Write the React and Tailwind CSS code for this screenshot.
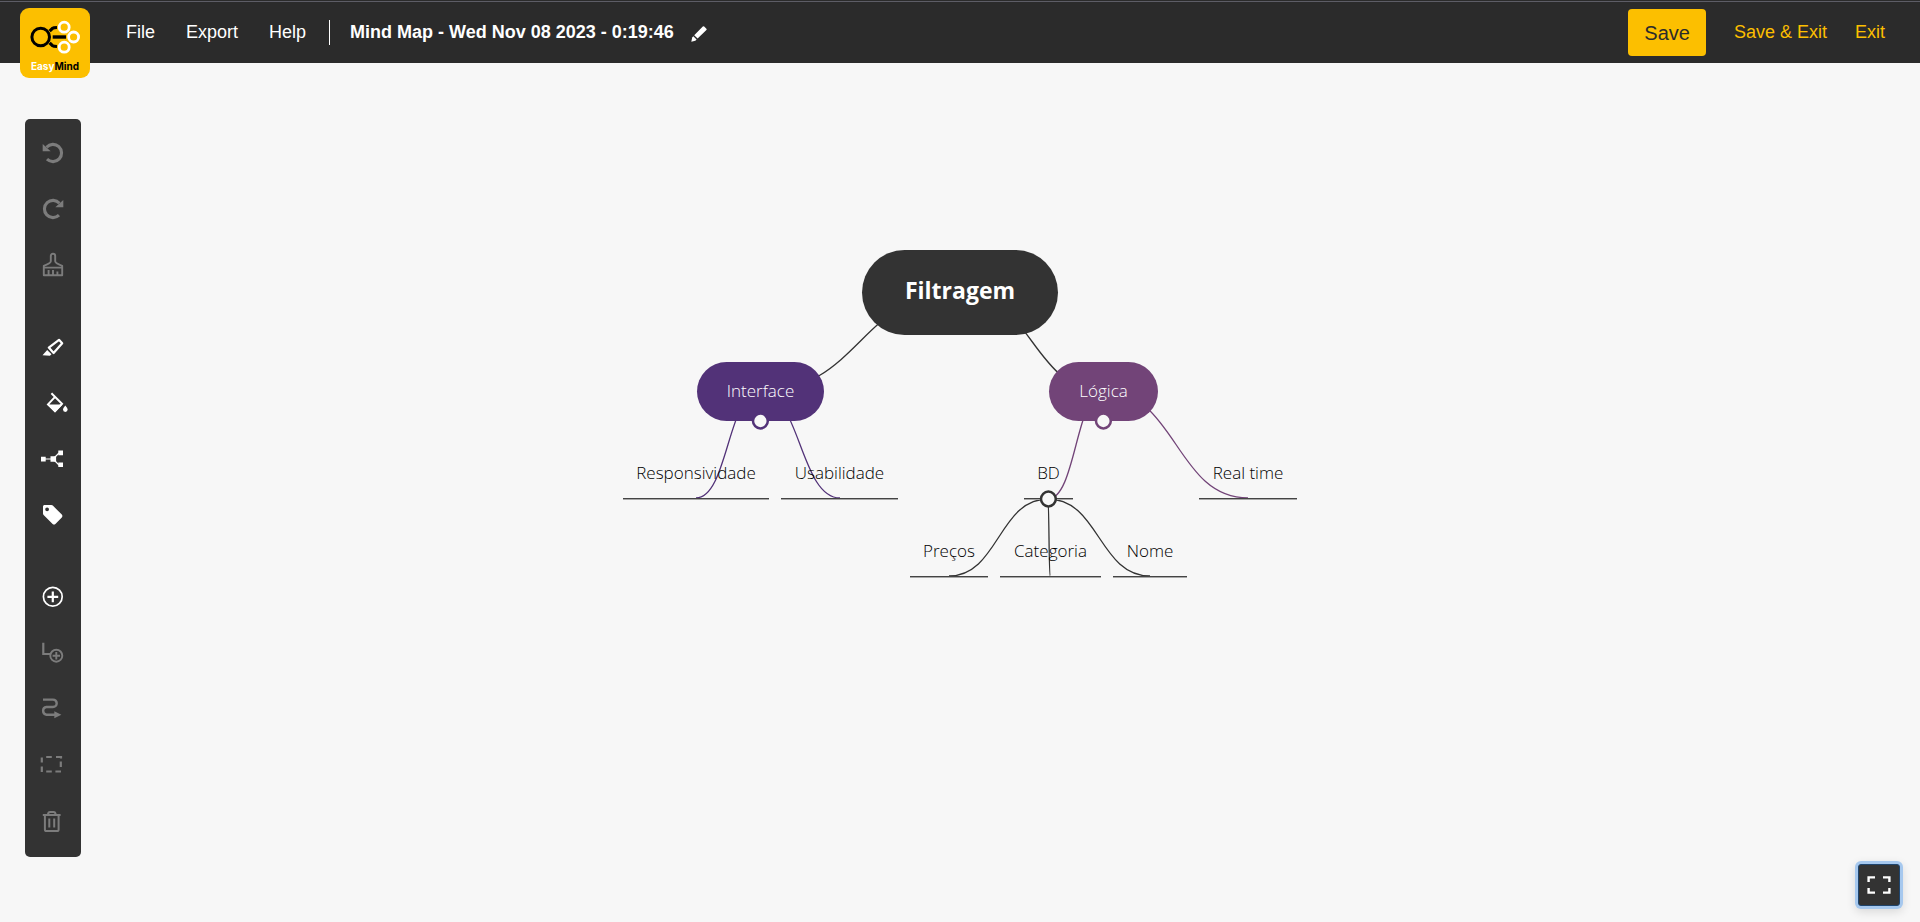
import React from "react";

const MENU = ["File", "Export", "Help"];

function Logo() {
  return (
    <a
      href="#home"
      aria-label="EasyMind home"
      className="flex h-[70px] w-[70px] shrink-0 flex-col items-center gap-1 rounded-[9px] bg-[#fcbf00] pt-3"
    >
      <svg width="50" height="34" viewBox="30 20 50 34" fill="none" className="shrink-0" aria-hidden="true">
        <circle cx="40.7" cy="37" r="8.8" stroke="#000" strokeWidth="3" />
        <path d="M52.7 37H66" stroke="#000" strokeWidth="3.4" />
        <path d="M49.6 31.2l2.6-2.6q1.4-1.1 4.8-1.1M49.6 42.8l2.6 2.6q1.4 1.1 4.8 1.1" stroke="#000" strokeWidth="3.2" />
        <g stroke="#fff" strokeWidth="2.8" fill="#fcbf00">
          <circle cx="64.2" cy="27.2" r="5" />
          <circle cx="73.6" cy="37" r="5" />
          <circle cx="64.2" cy="47.2" r="5" />
        </g>
      </svg>
      <span className="font-['Inter',sans-serif] text-[10px] leading-4 font-bold text-white">
        Easy<span className="text-black">Mind</span>
      </span>
    </a>
  );
}

const ICONS = {
  undo: (
    <>
      <path d="M6 18.2A8.6 8.6 0 1 0 5.6 6.2" stroke="currentColor" strokeWidth="3.1" />
      <path d="M1.7 3v7.2h8z" fill="currentColor" />
    </>
  ),
  redo: (
    <>
      <path d="M18 18.2A8.6 8.6 0 1 1 18.4 6.2" stroke="currentColor" strokeWidth="3.1" />
      <path d="M22.3 3v7.2h-8z" fill="currentColor" />
    </>
  ),
  brush: (
    <>
      <path
        d="M2.8 22.3V12.8Q9.8 10.2 9.8 8.2V3Q9.8.8 12 .8T14.2 3V8.2Q14.2 10.2 21.2 12.8V22.3z"
        stroke="currentColor"
        strokeWidth="1.9"
        strokeLinejoin="round"
      />
      <path d="M3 14.6H21M7.6 22V17M12 22V17M16.4 22V18.5" stroke="currentColor" strokeWidth="1.9" />
    </>
  ),
  highlighter: (
    <>
      <path d="M7.8 12.6L18 4.8l3.2 3.4-8.6 9.8z" stroke="currentColor" strokeWidth="2.2" strokeLinejoin="round" />
      <path d="M1.5 20.2L6.2 15l4.3 4.2-1.6 1.5z" fill="currentColor" />
    </>
  ),
  fill: (
    <>
      <path d="M10.4 2.2L21 12.8 14 20.2 7 13.4l6.6-7" stroke="currentColor" strokeWidth="2" />
      <path d="M6.6 13.4h15L14 21.4z" fill="currentColor" />
      <path d="M24.3 14.6q2.3 2.6 2.3 4a2.3 2.3 0 0 1-4.6 0q0-1.4 2.3-4z" fill="currentColor" />
    </>
  ),
  structure: (
    <>
      <path d="M0 9.8h4.7v4.6H0zM9.5 9.2h5.6v5.6H9.5zM17.3 3.6H22v4.6h-4.7zM17.3 15.4H22V20h-4.7z" fill="currentColor" />
      <path d="M4 12h6M13 11l5-5M13 13l5 5" stroke="currentColor" strokeWidth="1.2" />
    </>
  ),
  tag: (
    <path
      fill="currentColor"
      fillRule="evenodd"
      d="M20.8 11.6l-9-9C11.4 2.2 11 2 10.4 2H3.6C2.7 2 2 2.7 2 3.6v7c0 .5.2 1 .6 1.4l9 9c.8.8 2 .8 2.8 0l6.4-6.6c.8-.8.8-2 0-2.8zM6.1 8.2a1.9 1.9 0 1 1 0-3.8 1.9 1.9 0 0 1 0 3.8z"
    />
  ),
  add: (
    <>
      <circle cx="11.8" cy="11.8" r="9.4" stroke="currentColor" strokeWidth="1.7" />
      <path d="M11.8 6.4v10.8M6.4 11.8h10.8" stroke="currentColor" strokeWidth="2.2" />
    </>
  ),
  addChild: (
    <>
      <path d="M2.3 1.7V13H9" stroke="currentColor" strokeWidth="2.2" />
      <circle cx="15.3" cy="14.7" r="6" stroke="currentColor" strokeWidth="1.9" />
      <path d="M15.3 11v7.4M11.6 14.7H19" stroke="currentColor" strokeWidth="1.9" />
    </>
  ),
  relation: (
    <>
      <path d="M2 2.6H12a3.7 3.7 0 0 1 0 7.4H5.4a3.9 3.9 0 0 0 0 7.7H14" stroke="currentColor" strokeWidth="2.4" />
      <path d="M13.3 14.2L20.4 17.7 13.3 21.2z" fill="currentColor" />
    </>
  ),
  group: (
    <path
      d="M5.2 4H10.8M15 4h5v1.6M.8 9.4V4.4M.8 13.4V19M5.2 18.5H10.8M14.4 18.5H20M19.8 8.6V14"
      stroke="currentColor"
      strokeWidth="2.2"
    />
  ),
  trash: (
    <>
      <path d="M1.8 5.9H19.6M6.9 5.6Q7.2 3 9 3h3.6Q14.4 3 14.7 5.6" stroke="currentColor" strokeWidth="2" />
      <path d="M3.9 6V20.4Q3.9 22 5.5 22H16Q17.6 22 17.6 20.4V6M8.3 9.4V18.6M13.2 9.4V18.6" stroke="currentColor" strokeWidth="2" />
    </>
  ),
};

const TOOL_GROUPS = [
  [
    { icon: "undo", label: "Undo", disabled: true },
    { icon: "redo", label: "Redo", disabled: true },
    { icon: "brush", label: "Copy style", disabled: true },
  ],
  [
    { icon: "highlighter", label: "Line colour" },
    { icon: "fill", label: "Fill colour" },
    { icon: "structure", label: "Structure" },
    { icon: "tag", label: "Tag" },
  ],
  [
    { icon: "add", label: "Add node" },
    { icon: "addChild", label: "Add child", disabled: true },
    { icon: "relation", label: "Add relation", disabled: true },
    { icon: "group", label: "Group", disabled: true },
    { icon: "trash", label: "Delete", disabled: true },
  ],
];

function Toolbar() {
  return (
    <aside className="mt-14 ml-[25px] flex w-14 flex-col gap-[26px] self-start rounded-[5px] bg-[#333] pt-[6px] pb-2">
      {TOOL_GROUPS.map((group, i) => (
        <div key={i} className="flex flex-col">
          {group.map((tool) => (
            <button
              key={tool.icon}
              type="button"
              aria-label={tool.label}
              disabled={tool.disabled}
              className="flex h-14 items-center justify-center text-white disabled:text-[#7c7c7c]"
            >
              <svg width="24" height="24" viewBox="0 0 24 24" fill="none" className="overflow-visible" aria-hidden="true">
                {ICONS[tool.icon]}
              </svg>
            </button>
          ))}
        </div>
      ))}
    </aside>
  );
}

const EDGES = [
  { from: [340, 52], to: [140, 151], color: "#333" },
  { from: [340, 52], to: [484, 151], color: "#333" },
  { from: [140, 151], to: [76, 258], color: "#523278" },
  { from: [140, 151], to: [220, 258], color: "#523278" },
  { from: [484, 151], to: [428, 259], color: "#724478" },
  { from: [484, 151], to: [628, 258], color: "#724478" },
  { from: [428, 259], to: [329, 336], color: "#333" },
  { from: [428, 259], to: [430, 336], color: "#333" },
  { from: [428, 259], to: [530, 336], color: "#333" },
];

const TOGGLES = [
  { x: 140, y: 181, color: "#523278" },
  { x: 483, y: 181, color: "#724478" },
  { x: 428, y: 259, color: "#333" },
];

const LEAF =
  "absolute flex h-11 items-center justify-center border-b border-[#444] pb-2 shadow-[0_1px_0_#a8a8a8]";

function edgePath({ from, to }) {
  const mid = (from[0] + to[0]) / 2;
  return `M${from[0]} ${from[1]}C${mid} ${from[1]} ${mid} ${to[1]} ${to[0]} ${to[1]}`;
}

function MindMap() {
  return (
    <section
      aria-label="Mind map"
      className="relative mt-[177px] h-[350px] w-[680px] font-['Open_Sans',sans-serif] text-[17px] font-[360] text-black"
    >
      <svg className="absolute inset-0" width="680" height="350" viewBox="0 0 680 350" fill="none" aria-hidden="true">
        {EDGES.map((edge, i) => (
          <path key={i} d={edgePath(edge)} stroke={edge.color} strokeWidth="1.3" />
        ))}
      </svg>
      <div className="absolute top-[10px] left-[242px] flex h-[85px] w-[196px] items-center justify-center rounded-full bg-[#333] pb-1 text-[23px] font-bold text-white">
        Filtragem
      </div>
      <div className="absolute top-[122px] left-[77px] flex h-[59px] w-[127px] items-center justify-center rounded-full bg-[#523278] pb-[2px] text-white">
        Interface
      </div>
      <div className="absolute top-[122px] left-[429px] flex h-[59px] w-[109px] items-center justify-center rounded-full bg-[#724478] pb-[2px] text-white">
        Lógica
      </div>
      <div className={`${LEAF} top-[215px] left-[3px] w-[146px]`}>Responsividade</div>
      <div className={`${LEAF} top-[215px] left-[161px] w-[117px]`}>Usabilidade</div>
      <div className={`${LEAF} top-[215px] left-[404px] w-[49px]`}>BD</div>
      <div className={`${LEAF} top-[215px] left-[579px] w-[98px]`}>Real time</div>
      <div className={`${LEAF} top-[293px] left-[290px] w-[78px]`}>Preços</div>
      <div className={`${LEAF} top-[293px] left-[380px] w-[101px]`}>Categoria</div>
      <div className={`${LEAF} top-[293px] left-[493px] w-[74px]`}>Nome</div>
      <svg className="absolute inset-0" width="680" height="350" viewBox="0 0 680 350" aria-hidden="true">
        {TOGGLES.map((t) => (
          <circle key={t.x} cx={t.x + 0.4} cy={t.y} r="7.4" fill="#f7f7f7" stroke={t.color} strokeWidth="2.5" />
        ))}
      </svg>
    </section>
  );
}

export default function App() {
  return (
    <div className="flex min-h-screen flex-col bg-[#f7f7f7] font-['Liberation_Sans',Arial,sans-serif]">
      <header className="bg-[#2b2b2b] pt-px">
        <div className="flex h-[62px] items-start border-t border-[#5d5d66] pr-[35px] pl-5 text-lg leading-6 text-white">
          <div className="mt-[6px] h-14">
            <Logo />
          </div>
          <nav className="mt-[18px] ml-[21px] flex gap-px">
            {MENU.map((item) => (
              <button key={item} type="button" className="px-[15px]">
                {item}
              </button>
            ))}
          </nav>
          <div className="mt-[18px] ml-2 h-[25px] w-px bg-white" />
          <h1 className="mt-[18px] ml-5 font-bold">Mind Map - Wed Nov 08 2023 - 0:19:46</h1>
          <button type="button" aria-label="Rename" className="mt-[22px] ml-4">
            <svg width="18" height="20" viewBox="0 0 18 20" fill="#fff" aria-hidden="true">
              <path d="M12.8 2.6q.7-.7 1.4 0l2.2 2.1q.7.7 0 1.4L7.6 14.6 4.2 11.2z" />
              <path d="M3.3 12.2l3.3 3.3-1.3 1.2L1.3 17.8 2.2 13.4z" />
            </svg>
          </button>
          <div className="ml-auto flex gap-7 text-[#fcbf00]">
            <button type="button" className="mt-[7px] h-[47px] rounded bg-[#fcbf00] px-4 text-xl text-[#2b2b2b]">
              Save
            </button>
            <button type="button" className="mt-[18px] self-start">
              Save &amp; Exit
            </button>
            <button type="button" className="mt-[18px] self-start">
              Exit
            </button>
          </div>
        </div>
      </header>
      <main className="grid flex-1 grid-cols-[1fr_auto_1fr]">
        <Toolbar />
        <MindMap />
        <button
          type="button"
          aria-label="Full screen"
          className="mr-5 mb-4 flex h-[42px] w-[42px] items-center justify-center self-end justify-self-end rounded-[3px] border border-[#1f456e] bg-[#333] shadow-[0_0_0_3px_#a6c8ee,0_3px_10px_3px_rgba(0,0,0,0.12)]"
        >
          <svg width="24" height="20" viewBox="0 0 24 20" fill="none" stroke="#fff" strokeWidth="2.4" aria-hidden="true">
            <path d="M1.6 7V2.4H8M16 2.4h6.4V7M22.4 13v4.6H16M8 17.6H1.6V13" />
          </svg>
        </button>
      </main>
    </div>
  );
}
